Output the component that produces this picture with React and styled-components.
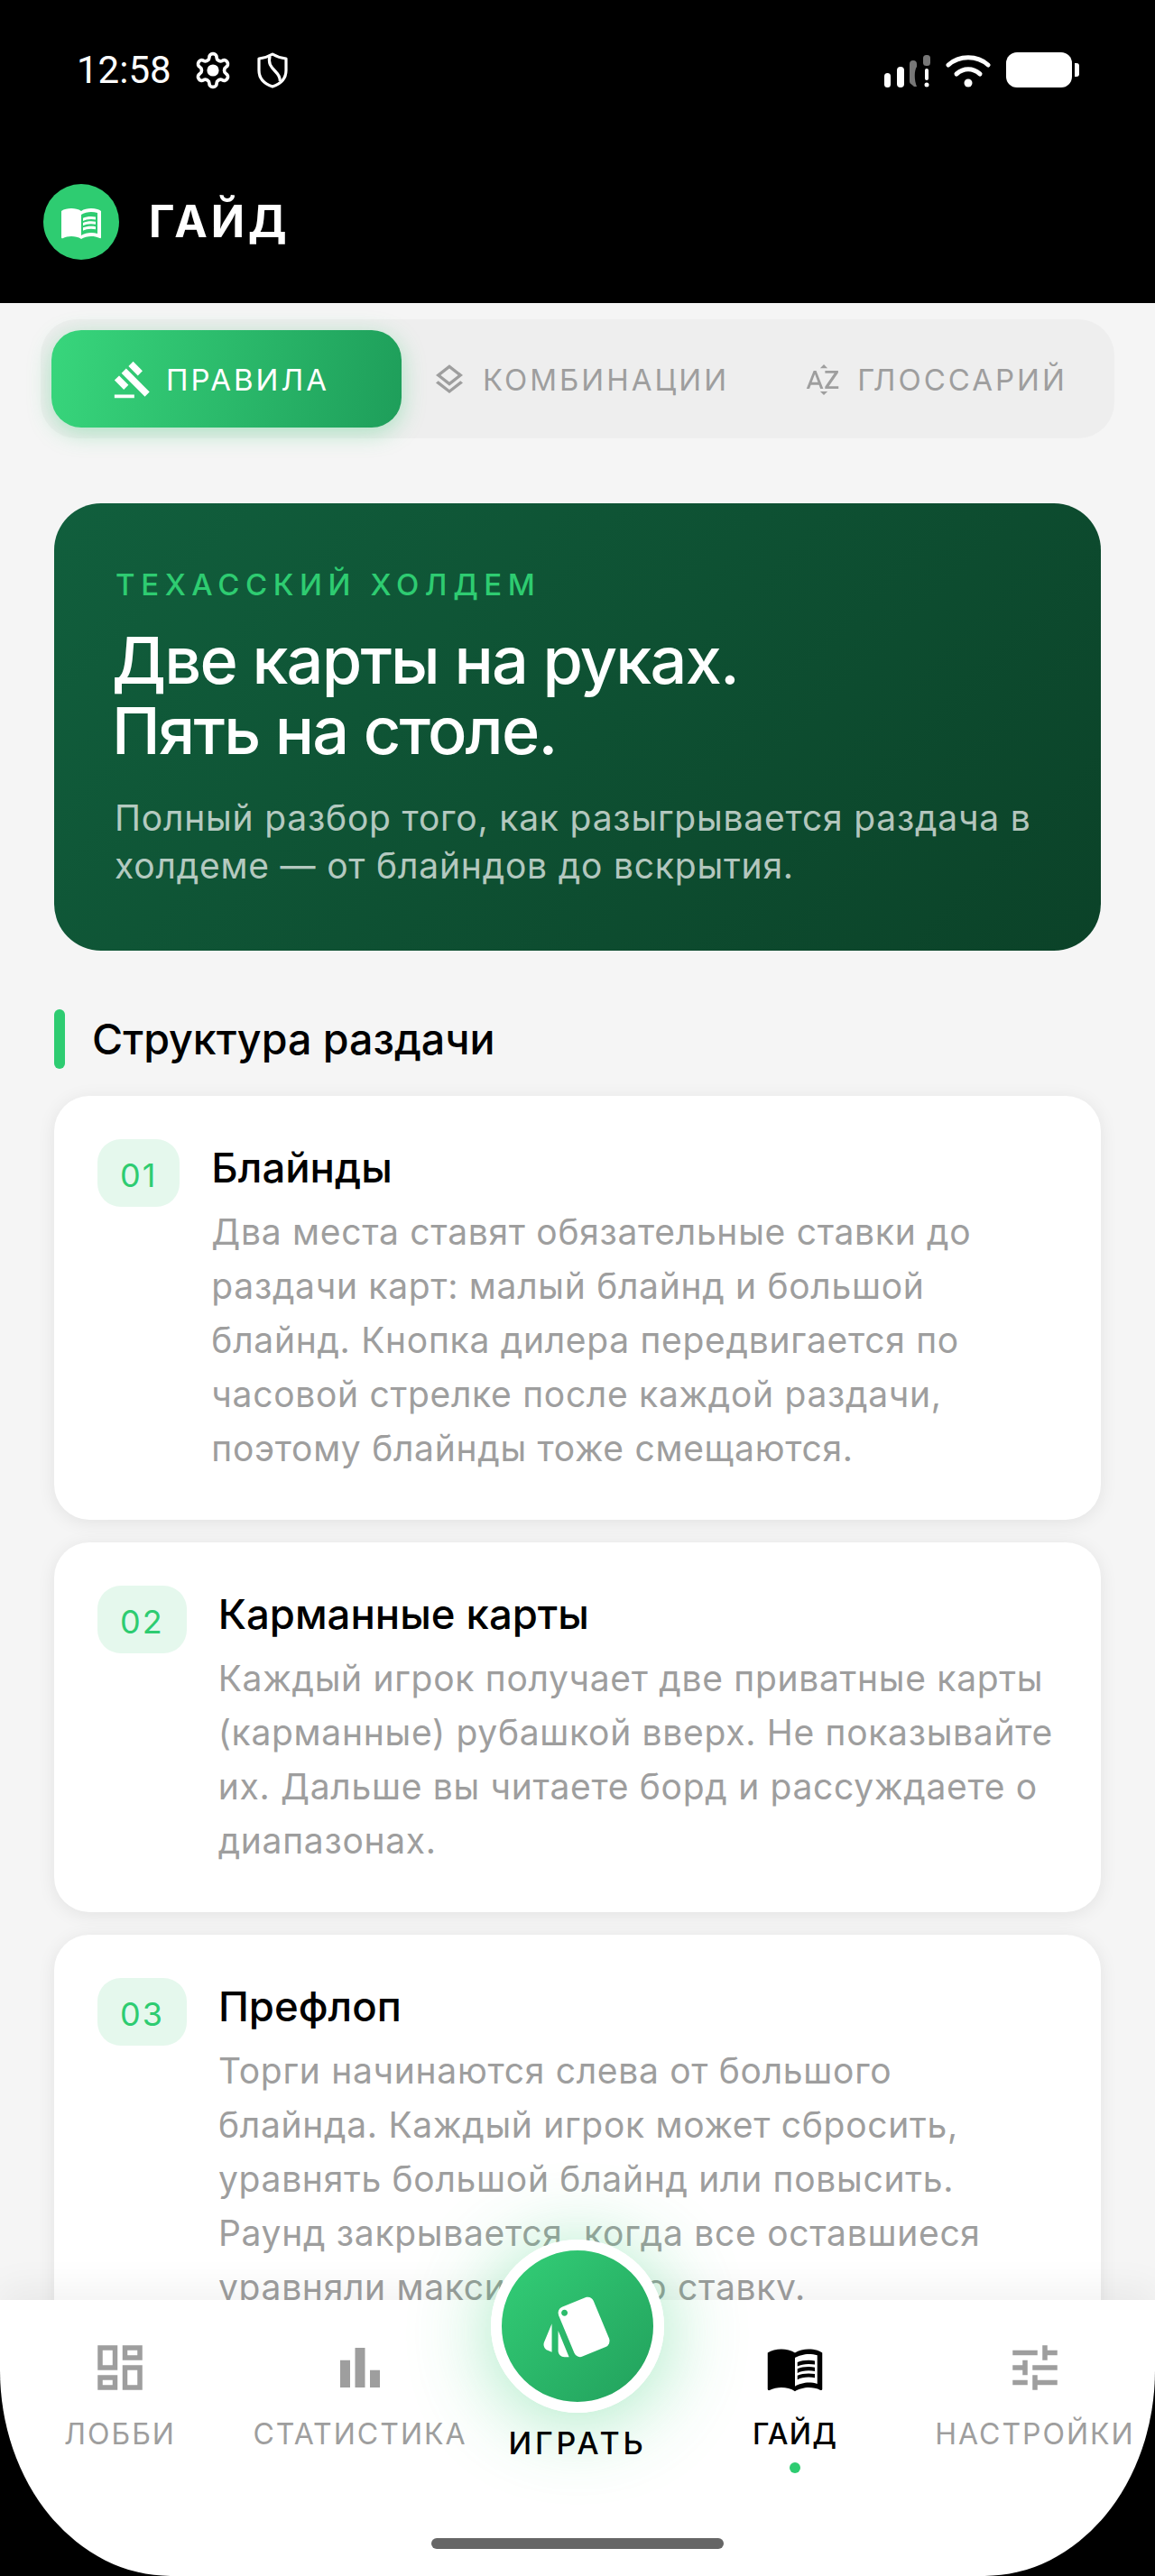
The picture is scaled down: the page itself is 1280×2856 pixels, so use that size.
import styled, { createGlobalStyle } from "styled-components";
import {
  MdBarChart,
  MdGavel,
  MdMenuBook,
  MdOutlineDashboard,
  MdOutlineLayers,
  MdOutlineSortByAlpha,
  MdOutlineTune,
  MdStyle,
} from "react-icons/md";

const steps = [
  {
    num: "01",
    title: "Блайнды",
    text: "Два места ставят обязательные ставки до раздачи карт: малый блайнд и большой блайнд. Кнопка дилера передвигается по часовой стрелке после каждой раздачи, поэтому блайнды тоже смещаются.",
  },
  {
    num: "02",
    title: "Карманные карты",
    text: "Каждый игрок получает две приватные карты (карманные) рубашкой вверх. Не показывайте их. Дальше вы читаете борд и рассуждаете о диапазонах.",
  },
  {
    num: "03",
    title: "Префлоп",
    text: "Торги начинаются слева от большого блайнда. Каждый игрок может сбросить, уравнять большой блайнд или повысить. Раунд закрывается, когда все оставшиеся уравняли максимальную ставку.",
  },
];

const GearIcon = () => (
  <svg width="44" height="44" viewBox="0 0 24 24" fill="none" stroke="#fff" strokeWidth="2">
    <path d="M12.22 2h-.44a2 2 0 0 0-2 2v.18a2 2 0 0 1-1 1.73l-.43.25a2 2 0 0 1-2 0l-.15-.08a2 2 0 0 0-2.73.73l-.22.38a2 2 0 0 0 .73 2.73l.15.1a2 2 0 0 1 1 1.72v.51a2 2 0 0 1-1 1.74l-.15.09a2 2 0 0 0-.73 2.73l.22.38a2 2 0 0 0 2.73.73l.15-.08a2 2 0 0 1 2 0l.43.25a2 2 0 0 1 1 1.73V20a2 2 0 0 0 2 2h.44a2 2 0 0 0 2-2v-.18a2 2 0 0 1 1-1.73l.43-.25a2 2 0 0 1 2 0l.15.08a2 2 0 0 0 2.73-.73l.22-.39a2 2 0 0 0-.73-2.73l-.15-.08a2 2 0 0 1-1-1.74v-.5a2 2 0 0 1 1-1.74l.15-.09a2 2 0 0 0 .73-2.73l-.22-.38a2 2 0 0 0-2.73-.73l-.15.08a2 2 0 0 1-2 0l-.43-.25a2 2 0 0 1-1-1.73V4a2 2 0 0 0-2-2z" />
    <circle cx="12" cy="12" r="3.6" fill="#fff" stroke="none" />
  </svg>
);

const ShieldIcon = () => (
  <svg width="36" height="40" viewBox="0 0 36 40" fill="none" stroke="#fff" strokeWidth="3.2" strokeLinejoin="round">
    <path d="M18 2 C23 5 28 6.5 33 7 V20 C33 29 27 35 18 38 C9 35 3 29 3 20 V7 C8 6.5 13 5 18 2 Z" />
    <path d="M15 4.5 C13 12 16 16 21 21 C25 25 27 28 26 32" />
  </svg>
);

const SignalIcon = () => (
  <svg width="52" height="37" viewBox="0 0 52 37" fill="#fff">
    <rect x="1" y="21" width="7" height="16" rx="3.5" />
    <rect x="15" y="14" width="8" height="23" rx="4" />
    <path d="M29 11 a4 4 0 0 1 8 0 v3 c-3 4 -3 15 0 22 h-3 c-3 -3 -5 -3 -5 -6 z" fill="#777" />
    <rect x="44" y="1" width="8" height="12" rx="3.5" fill="#777" />
    <rect x="46" y="16" width="4" height="13" rx="2" />
    <circle cx="48" cy="34" r="2.5" />
  </svg>
);

const WifiIcon = () => (
  <svg width="50" height="37" viewBox="0 0 50 37" fill="none" stroke="#fff" strokeWidth="5" strokeLinecap="round">
    <path d="M3 12 C15 1 35 1 47 12" />
    <path d="M12 22 C20 15 30 15 38 22" />
    <circle cx="25" cy="32" r="4.5" fill="#fff" stroke="none" />
  </svg>
);

const BatteryIcon = () => (
  <svg width="81" height="40" viewBox="0 0 81 40" fill="#fff">
    <rect x="0" y="0" width="73" height="39" rx="12" />
    <path d="M76 12 h2 a3 3 0 0 1 3 3 v9 a3 3 0 0 1 -3 3 h-2 z" />
  </svg>
);

const navItems = [
  { label: "ЛОББИ", Icon: MdOutlineDashboard },
  { label: "СТАТИСТИКА", Icon: MdBarChart },
  { play: true },
  { label: "ГАЙД", Icon: MdMenuBook, active: true },
  { label: "НАСТРОЙКИ", Icon: MdOutlineTune },
];

export default function App() {
  return (
    <>
      <GlobalStyle />
      <Screen>
        <TopArea>
          <StatusBar>
            <StatusLeft>
              <Clock>12:58</Clock>
              <GearIcon />
              <ShieldIcon />
            </StatusLeft>
            <StatusRight>
              <SignalIcon />
              <WifiIcon />
              <BatteryIcon />
            </StatusRight>
          </StatusBar>
          <Header>
            <LogoCircle>
              <MdMenuBook size={48} color="#fff" />
            </LogoCircle>
            <HeaderTitle>ГАЙД</HeaderTitle>
          </Header>
        </TopArea>

        <Main>
          <Tabs>
            <Tab $active>
              <MdGavel size={44} />
              ПРАВИЛА
            </Tab>
            <Tab>
              <MdOutlineLayers size={40} />
              КОМБИНАЦИИ
            </Tab>
            <Tab>
              <MdOutlineSortByAlpha size={42} />
              ГЛОССАРИЙ
            </Tab>
          </Tabs>

          <Hero>
            <Eyebrow>ТЕХАССКИЙ ХОЛДЕМ</Eyebrow>
            <HeroTitle>
              Две карты на руках.
              <br />
              Пять на столе.
            </HeroTitle>
            <HeroText>
              Полный разбор того, как разыгрывается раздача в холдеме — от блайндов до вскрытия.
            </HeroText>
          </Hero>

          <SectionHead>
            <SectionBar />
            <SectionTitle>Структура раздачи</SectionTitle>
          </SectionHead>

          <Cards>
            {steps.map((step) => (
              <Card key={step.num}>
                <NumBadge>{step.num}</NumBadge>
                <CardBody>
                  <CardTitle>{step.title}</CardTitle>
                  <CardText>{step.text}</CardText>
                </CardBody>
              </Card>
            ))}
          </Cards>
        </Main>

        <BottomNav>
          {navItems.map((item, i) =>
            item.play ? (
              <PlayItem key={i}>
                <PlayButton>
                  <MdStyle size={84} color="#fff" />
                </PlayButton>
                <PlayLabel>ИГРАТЬ</PlayLabel>
              </PlayItem>
            ) : (
              <NavItem key={i} $active={item.active}>
                <item.Icon size={66} />
                <NavLabel $active={item.active}>{item.label}</NavLabel>
                {item.active && <ActiveDot />}
              </NavItem>
            )
          )}
          <HomeBar />
        </BottomNav>
      </Screen>
    </>
  );
}

const GlobalStyle = createGlobalStyle`
  html, body {
    margin: 0;
    padding: 0;
    background: #000;
  }
  * {
    box-sizing: border-box;
  }
`;

const Screen = styled.div`
  width: 1280px;
  height: 2856px;
  display: flex;
  flex-direction: column;
  overflow: hidden;
  background: #000;
  font-family: Inter, "Noto Sans", sans-serif;
`;

const TopArea = styled.div`
  height: 336px;
  flex: none;
  background: #000;
  color: #fff;
`;

const StatusBar = styled.div`
  height: 146px;
  padding: 58px 84px 0 85px;
  display: flex;
  justify-content: space-between;
  align-items: flex-start;
`;

const StatusLeft = styled.div`
  display: flex;
  align-items: center;
  gap: 24px;
  height: 40px;
  svg:last-child {
    margin-left: 2px;
  }
`;

const Clock = styled.span`
  font-family: Roboto, sans-serif;
  font-size: 42px;
  line-height: 40px;
`;

const StatusRight = styled.div`
  display: flex;
  align-items: center;
  gap: 17px;
`;

const Header = styled.div`
  display: flex;
  align-items: center;
  gap: 33px;
  padding: 58px 0 0 48px;
`;

const LogoCircle = styled.div`
  width: 84px;
  height: 84px;
  border-radius: 50%;
  background: #2ecc71;
  display: flex;
  align-items: center;
  justify-content: center;
`;

const HeaderTitle = styled.h1`
  margin: 0;
  font-size: 49px;
  font-weight: 700;
  letter-spacing: 4px;
  line-height: 60px;
`;

const Main = styled.main`
  flex: 1;
  min-height: 0;
  overflow: hidden;
  background: #f5f5f5;
  padding: 18px 60px 0;
`;

const Tabs = styled.div`
  margin: 0 -15px;
  height: 132px;
  padding: 12px;
  border-radius: 40px;
  background: #eeeeee;
  display: grid;
  grid-template-columns: 388px 404px 1fr;
`;

const Tab = styled.div`
  display: flex;
  align-items: center;
  justify-content: center;
  gap: ${({ $active }) => ($active ? "15px" : "17px")};
  height: 108px;
  padding-top: 2px;
  padding-right: ${({ $active }) => ($active ? "12px" : "8px")};
  border-radius: 33px;
  font-size: 33px;
  font-weight: 400;
  letter-spacing: 3px;
  color: ${({ $active }) => ($active ? "#fff" : "#9e9e9e")};
  background: ${({ $active }) => ($active ? "linear-gradient(100deg, #38d67c, #1e9e5a)" : "transparent")};
  box-shadow: ${({ $active }) => ($active ? "0 6px 26px rgba(46, 204, 113, 0.35)" : "none")};
  &:last-child {
    margin-left: 10px;
  }
`;

const Hero = styled.section`
  margin-top: 72px;
  height: 496px;
  padding: 70px 68px 0;
  border-radius: 52px;
  background: linear-gradient(135deg, #115f3d, #0b4228);
`;

const Eyebrow = styled.div`
  font-size: 33px;
  line-height: 40px;
  letter-spacing: 6.6px;
  font-weight: 500;
  color: #2ecc71;
`;

const HeroTitle = styled.h2`
  margin: 25px 0 0 -4px;
  font-size: 72px;
  line-height: 78px;
  font-weight: 500;
  letter-spacing: -1.8px;
  color: #fff;
`;

const HeroText = styled.p`
  margin: 31px 0 0 -1px;
  font-size: 39px;
  line-height: 53px;
  letter-spacing: 0.8px;
  color: rgba(255, 255, 255, 0.7);
`;

const SectionHead = styled.div`
  margin-top: 65px;
  display: flex;
  align-items: center;
  gap: 30px;
`;

const SectionBar = styled.span`
  width: 12px;
  height: 66px;
  border-radius: 6px;
  background: #2ecc71;
`;

const SectionTitle = styled.h3`
  margin: 0;
  font-size: 46.6px;
  font-weight: 500;
  color: #000;
`;

const Cards = styled.div`
  margin-top: 30px;
  display: flex;
  flex-direction: column;
  gap: 25px;
`;

const Card = styled.article`
  display: flex;
  align-items: flex-start;
  gap: 35px;
  padding: 48px 48px 49px;
  border-radius: 39px;
  background: #fff;
  box-shadow: 0 3px 20px rgba(0, 0, 0, 0.08);
`;

const NumBadge = styled.span`
  flex: none;
  padding: 0 25px;
  height: 75px;
  border-radius: 26px;
  background: #e5f8ed;
  color: #2ecc71;
  font-size: 36px;
  line-height: 80px;
  letter-spacing: 2px;
`;

const CardBody = styled.div`
  flex: 1;
  min-width: 0;
`;

const CardTitle = styled.h4`
  margin: 3px 0 0;
  font-size: 45.5px;
  line-height: 58px;
  font-weight: 500;
  color: #000;
`;

const CardText = styled.p`
  margin: 12px 0 0;
  font-size: 39px;
  line-height: 60px;
  letter-spacing: 0.7px;
  color: #9e9e9e;
`;

const BottomNav = styled.nav`
  position: relative;
  flex: none;
  height: 306px;
  display: grid;
  grid-template-columns: 266px 266px 1fr 266px 266px;
  align-items: start;
  background: #fff;
  border-radius: 0 0 189px 189px / 0 0 228px 228px;
  box-shadow: 0 -14px 40px rgba(0, 0, 0, 0.05);
`;

const NavItem = styled.div`
  padding-top: 42px;
  display: flex;
  flex-direction: column;
  align-items: center;
  color: ${({ $active }) => ($active ? "#000" : "#9e9e9e")};
`;

const NavLabel = styled.span`
  margin-top: 21px;
  font-size: 32px;
  line-height: 40px;
  font-weight: ${({ $active }) => ($active ? 500 : 400)};
  letter-spacing: ${({ $active }) => ($active ? "1.2px" : "2px")};
  white-space: nowrap;
`;

const ActiveDot = styled.span`
  width: 12px;
  height: 12px;
  margin-top: 11px;
  border-radius: 50%;
  background: #2ecc71;
`;

const PlayItem = styled.div`
  margin-top: -67px;
  display: flex;
  flex-direction: column;
  align-items: center;
`;

const PlayButton = styled.div`
  width: 192px;
  height: 192px;
  border-radius: 50%;
  border: 12px solid #fff;
  background: linear-gradient(135deg, #33cf77, #22a05c);
  box-shadow: 0 8px 90px rgba(46, 204, 113, 0.45);
  display: flex;
  align-items: center;
  justify-content: center;
`;

const PlayLabel = styled.span`
  margin-top: 14px;
  font-size: 34px;
  line-height: 40px;
  font-weight: 500;
  letter-spacing: 3.8px;
  color: #000;
`;

const HomeBar = styled.span`
  position: absolute;
  left: 478px;
  bottom: 30px;
  width: 324px;
  height: 12px;
  border-radius: 6px;
  background: #666;
`;
